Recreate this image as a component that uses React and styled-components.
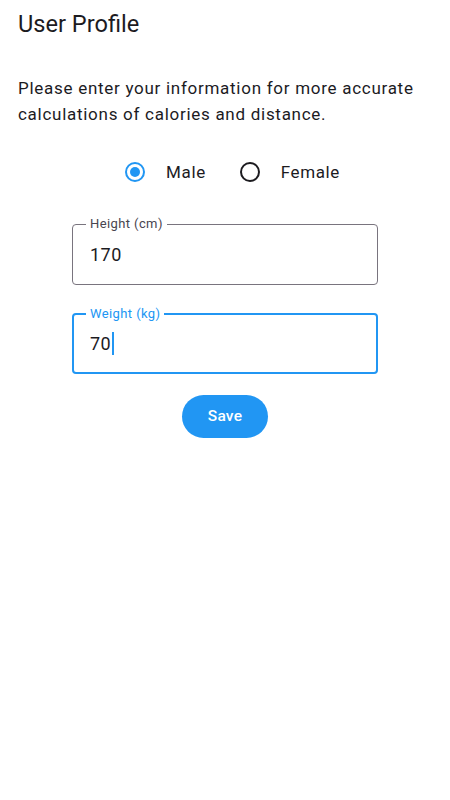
import React, { useState } from "react";
import styled, { createGlobalStyle } from "styled-components";

const Global = createGlobalStyle`
  html, body { margin: 0; padding: 0; background: #ffffff; }
  body { font-family: Roboto, "Noto Sans", sans-serif; color: #1c1b1f; }
  * { box-sizing: border-box; }
`;

const Page = styled.div`
  width: 450px;
  min-height: 800px;
  padding: 8px 18px 0;
  display: flex;
  flex-direction: column;
`;

const Title = styled.h1`
  margin: 0;
  font-size: 23.6px;
  line-height: 32px;
  font-weight: 400;
  color: #1c1b1f;
`;

const Intro = styled.p`
  margin: 35px 0 0;
  font-size: 17px;
  line-height: 26.3px;
  letter-spacing: 0.72px;
  color: #1c1b1f;
`;

const RadioGroup = styled.div`
  display: flex;
  justify-content: center;
  gap: 34px;
  padding-left: 15px;
  margin-top: 32px;
`;

const RadioItem = styled.label`
  display: flex;
  align-items: center;
  gap: 21px;
  cursor: pointer;
  font-size: 17px;
  letter-spacing: 0.6px;
  line-height: 24px;
  color: #1c1b1f;
`;

const Circle = styled.span`
  width: 20px;
  height: 20px;
  border-radius: 50%;
  border: 2px solid ${(p) => (p.$checked ? "#2196f3" : "#1c1b1f")};
  display: flex;
  align-items: center;
  justify-content: center;
  &::after {
    content: "";
    width: 10px;
    height: 10px;
    border-radius: 50%;
    background: #2196f3;
    display: ${(p) => (p.$checked ? "block" : "none")};
  }
`;

const Form = styled.div`
  width: 306px;
  align-self: center;
  display: flex;
  flex-direction: column;
  gap: 28px;
  margin-top: 40px;
`;

const Field = styled.div`
  position: relative;
  height: 61px;
  border-radius: 4px;
  border: ${(p) => (p.$focused ? "2px solid #2196f3" : "1px solid #79747e")};
  display: flex;
  align-items: center;
  padding-left: ${(p) => (p.$focused ? "16px" : "17px")};
`;

const FloatLabel = styled.span`
  position: absolute;
  top: -9px;
  left: ${(p) => (p.$focused ? "12px" : "13px")};
  padding: 0 4px;
  background: #ffffff;
  font-size: 13px;
  line-height: 16px;
  letter-spacing: 0.4px;
  color: ${(p) => (p.$focused ? "#2196f3" : "#49454f")};
`;

const Value = styled.span`
  font-size: 18px;
  letter-spacing: 0.5px;
  line-height: 24px;
  color: #1c1b1f;
  display: flex;
  align-items: center;
  margin-top: 1px;
`;

const Caret = styled.span`
  display: inline-block;
  width: 2px;
  height: 23px;
  margin-left: 1px;
  background: #2196f3;
`;

const SaveButton = styled.button`
  align-self: center;
  margin-top: 21px;
  width: 86px;
  height: 43px;
  border: none;
  border-radius: 22px;
  background: #2196f3;
  color: #ffffff;
  font-family: Roboto, sans-serif;
  font-size: 15.5px;
  font-weight: 500;
  letter-spacing: 0.2px;
  cursor: pointer;
`;

export default function App() {
  const [gender, setGender] = useState("male");
  return (
    <>
      <Global />
      <Page>
        <Title>User Profile</Title>
        <Intro>
          Please enter your information for more accurate calculations of
          calories and distance.
        </Intro>
        <RadioGroup>
          <RadioItem onClick={() => setGender("male")}>
            <Circle $checked={gender === "male"} />
            Male
          </RadioItem>
          <RadioItem onClick={() => setGender("female")}>
            <Circle $checked={gender === "female"} />
            Female
          </RadioItem>
        </RadioGroup>
        <Form>
          <Field>
            <FloatLabel>Height (cm)</FloatLabel>
            <Value>170</Value>
          </Field>
          <Field $focused>
            <FloatLabel $focused>Weight (kg)</FloatLabel>
            <Value>
              70
              <Caret />
            </Value>
          </Field>
        </Form>
        <SaveButton>Save</SaveButton>
      </Page>
    </>
  );
}
